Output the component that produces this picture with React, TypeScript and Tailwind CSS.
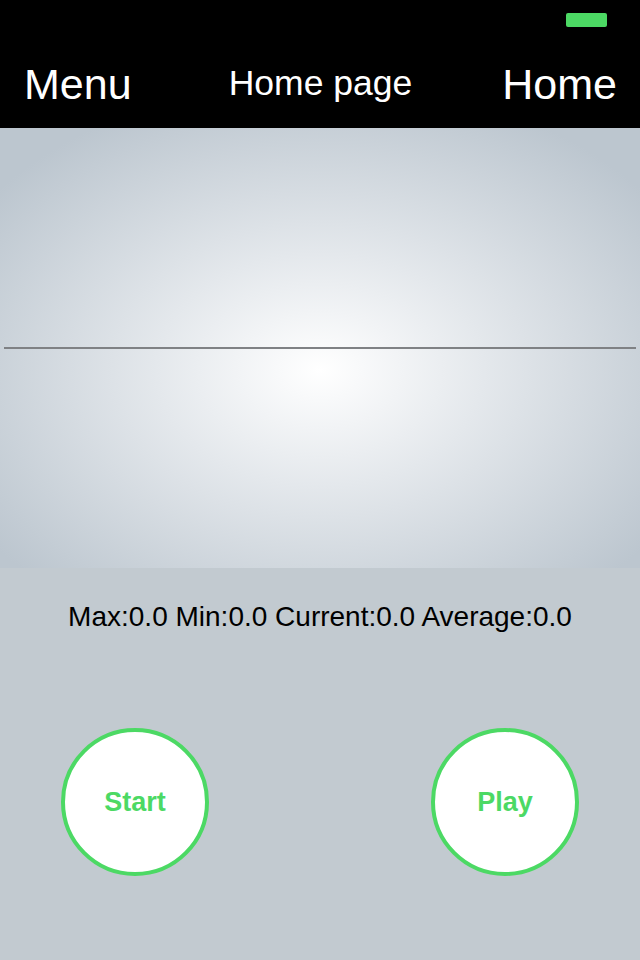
import React from "react";

export default function App() {
  return (
    <div className="w-[640px] h-[960px] flex flex-col bg-[#c2cad0] font-['Liberation_Sans',Arial,sans-serif]">
      <div className="h-[128px] bg-black flex flex-col">
        <div className="h-[40px] flex justify-end items-start pt-[13px] pr-[33px]">
          <div className="w-[41px] h-[14px] rounded-[2px] bg-[#4cd964]" />
        </div>
        <div className="flex-1 grid grid-cols-[1fr_auto_1fr] items-center text-white pl-[24px] pr-[23px]">
          <div className="text-[43px] leading-none justify-self-start">Menu</div>
          <div className="text-[35.5px] leading-none">Home page</div>
          <div className="text-[43px] leading-none justify-self-end">Home</div>
        </div>
      </div>
      <div className="h-[440px] flex items-center px-[4px] bg-[radial-gradient(ellipse_410px_290px_at_320px_242px,#ffffff_0%,#e4e8ec_40%,#bcc6cf_100%)]">
        <div className="w-full h-[2px] bg-[#7f8184]" />
      </div>
      <div className="flex-1 flex flex-col">
        <div className="pt-[33px] text-center text-[28px] leading-[32px] text-black">
          Max:0.0 Min:0.0 Current:0.0 Average:0.0
        </div>
        <div className="mt-[95px] flex justify-between px-[61px]">
          <button className="w-[148px] h-[148px] rounded-full border-4 border-[#4cd964] bg-white flex items-center justify-center text-[#4cd964] text-[27px] font-bold">
            Start
          </button>
          <button className="w-[148px] h-[148px] rounded-full border-4 border-[#4cd964] bg-white flex items-center justify-center text-[#4cd964] text-[27px] font-bold">
            Play
          </button>
        </div>
      </div>
    </div>
  );
}
